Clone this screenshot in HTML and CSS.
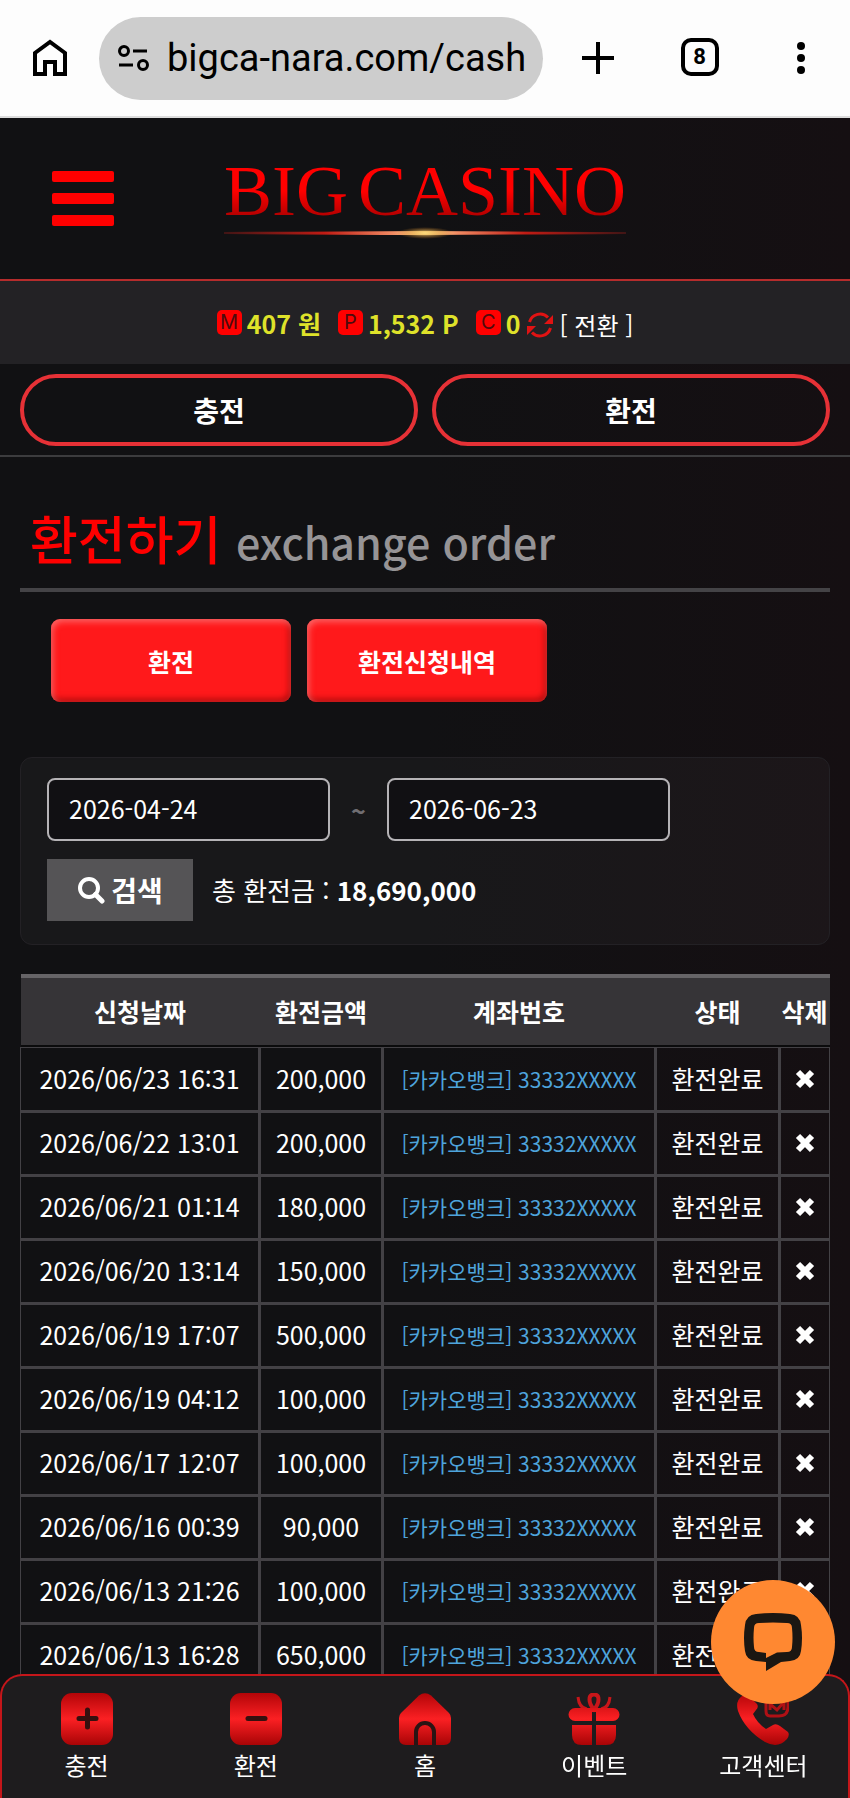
FILE: index.html
```html
<!DOCTYPE html>
<html lang="ko">
  <head>
    <meta charset="UTF-8" />
    <meta name="viewport" content="width=device-width, initial-scale=1" />
    <title>BIG CASINO</title>
    <link rel="stylesheet" href="styles.css">
  </head>
  <body>
    <!-- gradients shared by the bottom menu icons -->
    <svg class="defs" width="0" height="0" aria-hidden="true">
      <defs>
        <linearGradient id="red" x1="0" y1="0" x2="0" y2="52" gradientUnits="userSpaceOnUse">
          <stop offset="0" stop-color="#b30508" />
          <stop offset="0.5" stop-color="#fb2023" />
          <stop offset="1" stop-color="#a80406" />
        </linearGradient>
      </defs>
    </svg>

    <div class="browser-bar">
      <button class="bar-btn" aria-label="Home">
        <svg width="40" height="40" viewBox="0 0 40 40" fill="none" stroke="#000" stroke-width="4">
          <path d="M5 36V15L20 4l15 11v21H25V24H15v12z" />
        </svg>
      </button>
      <div class="address">
        <svg width="34" height="30" viewBox="0 0 34 30" fill="none" stroke="#000" stroke-width="3">
          <circle cx="7" cy="8" r="4.5" />
          <path d="M16 8h14M2 22h14" />
          <circle cx="26" cy="22" r="4.5" />
        </svg>
        <input type="text" value="bigca-nara.com/cash" aria-label="URL" />
      </div>
      <div class="bar-actions">
        <button class="bar-btn" aria-label="New tab">
          <svg width="40" height="40" viewBox="0 0 40 40" stroke="#000" stroke-width="4">
            <path d="M4 20h32M20 4v32" />
          </svg>
        </button>
        <button class="bar-btn tabs" aria-label="Tabs">8</button>
        <button class="bar-btn" aria-label="Menu">
          <svg width="40" height="40" viewBox="0 0 40 40">
            <circle cx="20" cy="8" r="4" />
            <circle cx="20" cy="20" r="4" />
            <circle cx="20" cy="32" r="4" />
          </svg>
        </button>
      </div>
    </div>

    <header>
      <button class="menu-btn" aria-label="메뉴">
        <span></span><span></span><span></span>
      </button>
      <a class="logo" href="#">
        <span class="logo-text"><span>BIG</span><span>CASINO</span></span>
        <svg viewBox="0 0 402 12" height="12" preserveAspectRatio="none">
          <defs>
            <linearGradient id="beam">
              <stop offset="0" stop-color="#401515" />
              <stop offset="0.25" stop-color="#c01b14" />
              <stop offset="0.42" stop-color="#f08a62" />
              <stop offset="0.5" stop-color="#ffe08a" />
              <stop offset="0.58" stop-color="#f08a62" />
              <stop offset="0.75" stop-color="#c01b14" />
              <stop offset="1" stop-color="#401515" />
            </linearGradient>
            <radialGradient id="glow">
              <stop offset="0" stop-color="#ffdf80" />
              <stop offset="1" stop-color="#c07018" stop-opacity="0" />
            </radialGradient>
          </defs>
          <path d="M0 5Q110 4.500 201 4Q292 4.500 402 5V7Q292 7.500 201 8Q110 7.500 0 7z" fill="url(#beam)" />
          <ellipse cx="201" cy="6" rx="28" ry="6" fill="url(#glow)" />
        </svg>
      </a>
    </header>

    <div class="balance">
      <span class="item"><span class="badge">M</span>407 원</span>
      <span class="item"><span class="badge">P</span>1,532 P</span>
      <span class="item"><span class="badge">C</span>0</span>
      <a class="convert" href="#">
        <svg width="28" height="28" viewBox="0 0 28 28" fill="none" stroke="#e01313" stroke-width="3">
          <path d="M3.500 11A11 11 0 0 1 22 6.500M24.500 17A11 11 0 0 1 6 21.500" />
          <path d="M27 4v9h-9zM1 24v-9h9z" fill="#e01313" stroke="none" />
        </svg>
        [ 전환 ]
      </a>
    </div>

    <nav class="quick">
      <a href="#">충전</a>
      <a href="#">환전</a>
    </nav>

    <main>
      <h1>환전하기 <small>exchange order</small></h1>

      <div class="tabs-row">
        <button>환전</button>
        <button>환전신청내역</button>
      </div>

      <form class="search-box">
        <div class="dates">
          <input type="text" value="2026-04-24" aria-label="시작일" />
          <span>~</span>
          <input type="text" value="2026-06-23" aria-label="종료일" />
        </div>
        <div class="search-row">
          <button type="button">
            <svg width="28" height="28" viewBox="0 0 28 28" fill="none" stroke="#fff" stroke-width="4">
              <circle cx="12" cy="12" r="9" />
              <path d="M18.500 18.500l6.500 6.500" stroke-width="5" stroke-linecap="round" />
            </svg>
            검색
          </button>
          <p>총 환전금 : <b>18,690,000</b></p>
        </div>
      </form>

      <table>
        <colgroup>
          <col class="c-date" />
          <col class="c-amount" />
          <col class="c-account" />
          <col class="c-state" />
          <col class="c-del" />
        </colgroup>
        <thead>
          <tr><th>신청날짜</th><th>환전금액</th><th>계좌번호</th><th>상태</th><th>삭제</th></tr>
        </thead>
        <tbody id="rows"></tbody>
      </table>
    </main>

    <button class="chat" aria-label="채팅">
      <svg width="58" height="58" viewBox="0 0 58 58">
        <path fill-rule="evenodd" d="M12 1Q29-1 46 1Q56 2 57 12Q59 25 57 38Q56 47 46 48L37 49L22 58V49L12 48Q2 47 1 38Q-1 25 1 12Q2 2 12 1zM15 10Q10 10 10 15Q9 25 10 34Q10 39 15 39L22 40V45L33 39.500L43 39Q48 39 48 34Q49 25 48 15Q48 10 43 10Q29 9 15 10z" fill="#1b1712" />
      </svg>
    </button>

    <nav class="bottom-nav">
      <a href="#">
        <svg width="52" height="52" viewBox="0 0 52 52">
          <rect width="52" height="52" rx="11" fill="url(#red)" />
          <path d="M18 25.500h17M26.500 17v17" stroke="#35100f" stroke-width="5" stroke-linecap="round" />
        </svg>
        충전
      </a>
      <a href="#">
        <svg width="52" height="52" viewBox="0 0 52 52">
          <rect width="52" height="52" rx="11" fill="url(#red)" />
          <path d="M18 25.500h17" stroke="#35100f" stroke-width="5" stroke-linecap="round" />
        </svg>
        환전
      </a>
      <a href="#">
        <svg width="52" height="52" viewBox="0 0 52 52">
          <path d="M20 2.500Q26-2 32 2.500L50 20Q52 22 52 25V45Q52 52 45 52H7Q0 52 0 45V25Q0 22 2 20z" fill="url(#red)" />
          <path d="M17 53V39a9 9 0 0 1 18 0v14" fill="none" stroke="#2a1414" stroke-width="4" />
        </svg>
        홈
      </a>
      <a href="#">
        <svg width="52" height="52" viewBox="0 0 52 52">
          <path d="M10 4q1 11 9 12M42 4q-1 11-9 12" fill="none" stroke="#c8161a" stroke-width="3" />
          <path d="M26 1.500c6 0 6 8 0 15c-6-7-6-15 0-15z" fill="none" stroke="#c8161a" stroke-width="4" />
          <path d="M7 15H45A6.500 6.500 0 0 1 45 28H28V19H24V28H7A6.500 6.500 0 0 1 7 15zM4 32H24V52H14Q4 52 4 42zM28 32H48V42Q48 52 38 52H28z" fill="url(#red)" />
        </svg>
        이벤트
      </a>
      <a href="#">
        <svg width="52" height="52" viewBox="0 0 52 52">
          <path d="M10 1L20 11Q22 14 19 17L16 21Q20 30 29 36L36 32Q39 30 43 33L51 39Q53 42 50 46Q41 56 28 49Q8 37 1 18Q-2 8 5 3Q8 0 10 1z" fill="url(#red)" />
          <path d="M29 14V5Q29 1 33 1H47Q51 1 51 5V14Q51 23 42 23H33Q29 23 29 18z" fill="none" stroke="#b01015" stroke-width="3" />
          <path d="M33 17V11l7 6l7-8v8" fill="none" stroke="#b01015" stroke-width="3" />
        </svg>
        고객센터
      </a>
    </nav>

    <script src="app.js"></script>
  </body>
</html>
```

FILE: styles.css
```css
* {
  box-sizing: border-box;
}
body {
  margin: 0;
  min-height: 100vh;
  font-family: "Noto Sans CJK KR", sans-serif;
  font-size: 25px;
  line-height: 36px;
  color: #fff;
  background: linear-gradient(90deg, #111113 50%, #150f12);
}
button,
input {
  font-family: inherit;
  font-size: inherit;
  line-height: inherit;
  color: inherit;
}
button {
  padding: 0;
  border: none;
  background: none;
  cursor: pointer;
}
a {
  color: inherit;
  text-decoration: none;
}
svg {
  display: block;
  flex: none;
}
.defs {
  position: absolute;
}

/* browser bar */
.browser-bar {
  display: flex;
  align-items: center;
  height: 118px;
  padding: 0 29px 0 30px;
  background: #fdfdfd;
  border-bottom: 2px solid #ddd;
  color: #000;
}
.address {
  display: flex;
  align-items: center;
  gap: 16px;
  width: 444px;
  height: 83px;
  margin-left: 29px;
  padding: 0 8px 0 18px;
  border-radius: 42px;
  background: #cdcdcd;
}
.address input {
  flex: 1;
  min-width: 0;
  padding: 0;
  border: none;
  background: none;
  font-family: Roboto, sans-serif;
  font-size: 38px;
  line-height: 50px;
}
.bar-actions {
  flex: 1;
  display: flex;
  justify-content: space-between;
  margin-left: 35px;
}
.bar-btn {
  width: 40px;
  height: 40px;
}
.tabs {
  width: 38px;
  height: 38px;
  border: 4px solid #000;
  border-radius: 10px;
  font: bold 22px/30px Roboto, sans-serif;
}

/* site header */
header {
  display: grid;
  grid-template-columns: 1fr auto 1fr;
  align-items: center;
  height: 163px;
  padding: 0 52px;
  border-bottom: 2px solid #b52c2c;
}
.menu-btn {
  display: flex;
  flex-direction: column;
  gap: 11px;
  width: 62px;
}
.menu-btn span {
  height: 11px;
  border-radius: 2px;
  background: #f00;
}
.logo {
  padding-bottom: 4px;
}
.logo-text {
  display: flex;
  gap: 10px;
  font-family: "Liberation Serif", serif;
  font-size: 72px;
  line-height: 72px;
  background: linear-gradient(#f00 50%, #a80000 90%);
  background-clip: text;
  -webkit-background-clip: text;
  color: transparent;
}
.logo svg {
  width: 100%;
}

.balance {
  display: flex;
  justify-content: center;
  align-items: center;
  gap: 17px;
  height: 83px;
  background: #232225;
}
.item {
  display: flex;
  align-items: center;
  gap: 5px;
  font-weight: bold;
  color: #dfe22a;
}
.badge {
  width: 25px;
  border-radius: 5px;
  background: #f00;
  color: #4d0b0d;
  font: 20px/25px Inter, sans-serif;
  text-align: center;
}
.convert {
  display: flex;
  align-items: center;
  gap: 6px;
  margin-left: -12px;
  padding-top: 4px;
  font-size: 24px;
}

.quick {
  display: flex;
  gap: 14px;
  padding: 10px 20px 9px;
  border-bottom: 2px solid #3c3c3e;
}
.quick a {
  flex: 1;
  border: 4px solid #e63136;
  border-radius: 36px;
  font-size: 28px;
  font-weight: bold;
  line-height: 64px;
  text-align: center;
}

/* content */
main {
  padding: 44px 20px 90px;
}
h1 {
  margin: 0;
  padding: 0 10px 10px;
  border-bottom: 4px solid #444346;
  font-size: 52px;
  font-weight: 500;
  line-height: 74px;
  color: #f00;
}
h1 small {
  font-size: 43px;
  color: #969496;
}
.tabs-row {
  display: flex;
  gap: 16px;
  padding: 27px 31px 55px;
}
.tabs-row button {
  width: 240px;
  height: 83px;
  border-radius: 9px;
  background: #ff191b;
  box-shadow: inset 2px 3px 6px rgba(255, 150, 150, 0.6), inset -2px -3px 6px rgba(120, 0, 0, 0.6);
  font-weight: bold;
}
.search-box {
  display: flex;
  flex-direction: column;
  gap: 18px;
  padding: 20px 26px 23px;
  border: 1px solid #232125;
  border-radius: 12px;
  background: rgba(255, 255, 255, 0.03);
}
.dates {
  display: flex;
  align-items: center;
}
.dates input {
  width: 283px;
  height: 63px;
  padding: 0 20px 3px;
  border: 2px solid #b5b3b6;
  border-radius: 8px;
  background: #111013;
}
.dates span {
  width: 57px;
  text-align: center;
  font-weight: bold;
  color: #706e72;
}
.search-row {
  display: flex;
  align-items: center;
  gap: 19px;
}
.search-row button {
  display: flex;
  justify-content: center;
  align-items: center;
  gap: 6px;
  width: 146px;
  height: 62px;
  background: #555456;
  font-size: 28px;
  font-weight: bold;
}
.search-row p {
  margin: 0;
  font-size: 26px;
}

table {
  width: 100%;
  margin-top: 29px;
  border-collapse: collapse;
  table-layout: fixed;
}
.c-date {
  width: 239px;
}
.c-amount {
  width: 123px;
}
.c-state {
  width: 124px;
}
.c-del {
  width: 50px;
}
th {
  height: 71px;
  padding: 0 0 2px;
  border-top: 4px solid #666467;
  background: #363437;
  box-shadow: inset 0 -2px #0b0b0c;
  white-space: nowrap;
}
td {
  height: 64px;
  padding: 0 0 2px;
  border: 3px solid #434145;
  text-align: center;
}
tr:first-child td {
  border-top-width: 1px;
}
td:first-child {
  border-left-width: 1px;
}
td:last-child {
  border-right-width: 1px;
}
td a {
  font-size: 21px;
  color: #4ea4dc;
}
td svg {
  margin: 0 auto;
}

/* floating parts */
.chat {
  position: fixed;
  right: 15px;
  bottom: 94px;
  z-index: 2;
  display: flex;
  justify-content: center;
  align-items: center;
  width: 124px;
  height: 124px;
  border-radius: 50%;
  background: #ff8831;
}
.bottom-nav {
  position: fixed;
  left: 0;
  right: 0;
  bottom: 0;
  display: flex;
  height: 124px;
  padding-top: 17px;
  border: 2px solid #c4161a;
  border-bottom: none;
  border-radius: 22px 22px 0 0;
  background: #1e1c1e;
}
.bottom-nav a {
  flex: 1;
  display: flex;
  flex-direction: column;
  align-items: center;
  gap: 2px;
  font-size: 24px;
}
```

FILE: app.js
```js
const rows = [
  ["2026/06/23 16:31", "200,000"],
  ["2026/06/22 13:01", "200,000"],
  ["2026/06/21 01:14", "180,000"],
  ["2026/06/20 13:14", "150,000"],
  ["2026/06/19 17:07", "500,000"],
  ["2026/06/19 04:12", "100,000"],
  ["2026/06/17 12:07", "100,000"],
  ["2026/06/16 00:39", "90,000"],
  ["2026/06/13 21:26", "100,000"],
  ["2026/06/13 16:28", "650,000"],
];

document.getElementById("rows").innerHTML = rows
  .map(
    ([date, amount]) => `
    <tr>
      <td>${date}</td>
      <td>${amount}</td>
      <td><a href="#">[카카오뱅크] 33332XXXXX</a></td>
      <td>환전완료</td>
      <td>
        <button aria-label="삭제">
          <svg width="20" height="20" viewBox="0 0 20 20" stroke="#fff" stroke-width="6">
            <path d="M3 3l14 14M17 3L3 17" />
          </svg>
        </button>
      </td>
    </tr>`
  )
  .join("");
```
